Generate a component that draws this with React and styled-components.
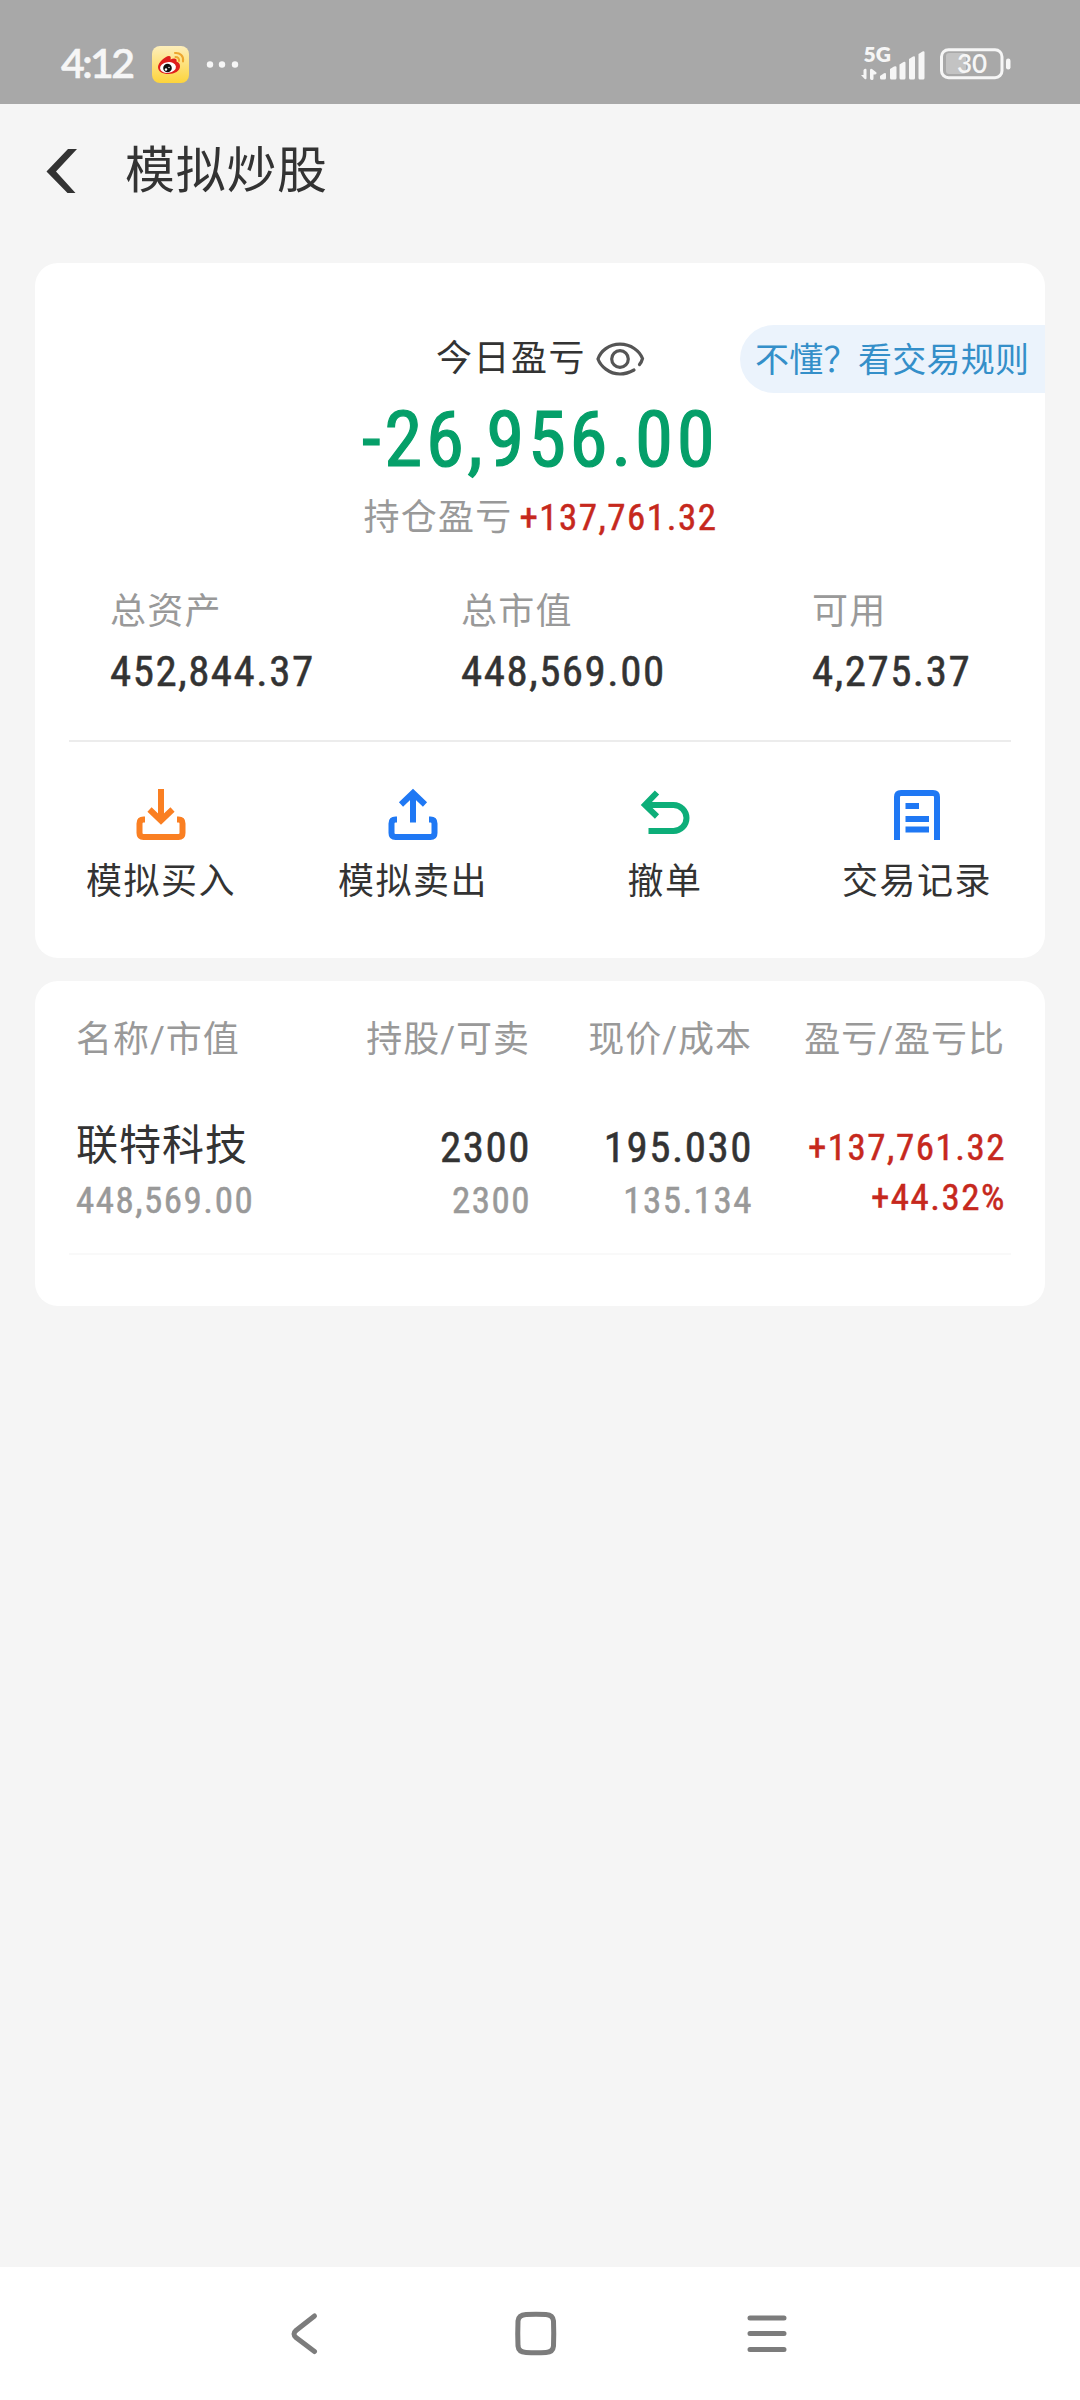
import React from 'react';
import styled, { createGlobalStyle } from 'styled-components';

const GlobalStyle = createGlobalStyle`
	* {
		box-sizing: border-box;
	}

	body {
		margin: 0;
		background: #f5f5f5;
		font-family: Roboto, 'Noto Sans CJK SC', sans-serif;
		color: #333333;
	}

	svg {
		display: block;
		flex: none;
		overflow: visible;
	}
`;

const Screen = styled.div`
	display: flex;
	flex-direction: column;
	width: 1080px;
	height: 2400px;
	background: #f5f5f5;
	overflow: hidden;
`;

const StatusBar = styled.div`
	display: flex;
	align-items: center;
	justify-content: space-between;
	height: 104px;
	padding: 25px 69px 0 61px;
	background: #a8a8a8;
	color: #f6f6f6;
`;

const StatusGroup = styled.div`
	display: flex;
	align-items: center;
	gap: ${({ gap }) => gap}px;
`;

const Clock = styled.span`
	width: 75px;
	padding-bottom: 3px;
	font-family: Lato, sans-serif;
	font-size: 41px;
	font-weight: 600;
	line-height: 40px;
	letter-spacing: -2.6px;
	white-space: nowrap;
	-webkit-text-stroke: 0.5px currentColor;
`;

const Header = styled.header`
	display: flex;
	align-items: center;
	height: 159px;
	padding: 0 0 25px 46px;
	gap: 47px;
`;

const Title = styled.h1`
	margin: 0;
	font-size: 50px;
	font-weight: 400;
	line-height: 58px;
	letter-spacing: 0.7px;
`;

const Card = styled.section`
	width: 1010px;
	height: ${({ height }) => height}px;
	margin: 0 0 23px 35px;
	border-radius: 23px;
	background: #ffffff;
`;

const Summary = styled.div`
	position: relative;
	display: flex;
	flex-direction: column;
	align-items: center;
	padding-top: 72px;
`;

const RulesLink = styled.a`
	position: absolute;
	top: 62px;
	right: 0;
	width: 305px;
	height: 68px;
	padding-left: 15px;
	border-radius: 34px 0 0 34px;
	background: #ebf3fc;
	color: #348fc9;
	font-size: 34px;
	line-height: 70px;
	letter-spacing: 0.3px;
	white-space: nowrap;
`;

const TodayLabel = styled.div`
	display: flex;
	align-items: center;
	gap: 10px;
	height: 48px;
	font-size: 36px;
	line-height: 50px;
	letter-spacing: 1.5px;
`;

const TodayValue = styled.div`
	height: 112px;
	font-size: 77px;
	font-weight: 400;
	font-stretch: condensed;
	line-height: 115px;
	letter-spacing: 3.6px;
	color: #059f69;
	-webkit-text-stroke: 1.2px currentColor;
`;

const HoldingLine = styled.div`
	display: flex;
	align-items: center;
	height: 46px;
	gap: 7px;
`;

const Label = styled.span`
	font-size: 36px;
	line-height: 44px;
	letter-spacing: 1.2px;
	color: #999999;
`;

const Figure = styled.span`
	margin-right: -1px;
	font-size: ${({ size }) => size}px;
	font-weight: 400;
	font-stretch: condensed;
	line-height: 44px;
	letter-spacing: 1.5px;
	color: ${({ color }) => color || '#333333'};
	white-space: nowrap;
	-webkit-text-stroke: 0.5px currentColor;
`;

const Stats = styled.div`
	display: grid;
	grid-template-columns: 351px 351px auto;
	height: 150px;
	margin: 49px 0 0 75px;
`;

const Stat = styled.div`
	display: flex;
	flex-direction: column;
	gap: 15px;
`;

const Divider = styled.div`
	height: 2px;
	margin: 0 34px;
	background: ${({ color }) => color};
`;

const Actions = styled.div`
	display: grid;
	grid-template-columns: repeat(4, 252px);
	padding-top: 46px;
`;

const Action = styled.div`
	display: flex;
	flex-direction: column;
	align-items: center;
	gap: 18px;
	font-size: 36px;
	line-height: 48px;
	letter-spacing: 1.5px;
`;

const Holdings = styled.div`
	display: grid;
	grid-template-columns: 195px 259px 222px 253px;
	padding: 0 41px;
`;

const HeadCell = styled.div`
	height: 112px;
	padding-top: 36px;
	font-size: 36px;
	line-height: 46px;
	letter-spacing: 1px;
	color: #999999;
	text-align: ${({ align }) => align || 'right'};
	white-space: nowrap;
`;

const Cell = styled.div`
	display: flex;
	flex-direction: column;
	align-items: ${({ align }) => align || 'flex-end'};
	gap: ${({ gap }) => gap}px;
	height: 160px;
	padding-top: ${({ top }) => top}px;
`;

const StockName = styled.span`
	font-size: 42px;
	line-height: 48px;
	letter-spacing: 1px;
	white-space: nowrap;
`;

const NavBar = styled.nav`
	display: flex;
	justify-content: space-between;
	height: 133px;
	margin-top: auto;
	padding: 42px 290px 0 288px;
	background: #ffffff;
`;

const RED = '#c6281d';
const GREY = '#999999';

const stats = [
	{ label: '总资产', value: '452,844.37' },
	{ label: '总市值', value: '448,569.00' },
	{ label: '可用', value: '4,275.37' },
];

const WeiboIcon = () => (
	<svg width="38" height="38" viewBox="0 0 38 38">
		<defs>
			<linearGradient id="weiboBg" x1="0" y1="0" x2="0" y2="1">
				<stop offset="0" stopColor="#fdeebb" />
				<stop offset="1" stopColor="#fdd43b" />
			</linearGradient>
		</defs>
		<rect width="37" height="37" rx="8" fill="url(#weiboBg)" />
		<path
			d="M6 21c0-4 7-11 11-11 2 0 2 2 1.500 3.500 3-1.500 7-1.500 6 2 3 1 3.500 3 3.500 5 0 4.500-5.500 7.500-11.500 7.500S6 25.500 6 21z"
			fill="#df1f1c"
		/>
		<ellipse cx="16" cy="21.500" rx="8" ry="5.300" fill="#ffffff" transform="rotate(-8 16 21.500)" />
		<circle cx="15.500" cy="22" r="4.300" fill="#111111" />
		<circle cx="14" cy="23.500" r="1.200" fill="#ffffff" />
		<circle cx="17" cy="21.500" r="0.700" fill="#ffffff" />
		<path
			d="M23 7c5-.5 9 3 8 8.500M23.500 11c2.500 0 4 1.500 3.500 4"
			fill="none"
			stroke="#eda62f"
			strokeWidth="2"
			strokeLinecap="round"
		/>
	</svg>
);

const MoreDots = () => (
	<svg width="34" height="8" viewBox="0 0 34 8" fill="#f6f6f6">
		<circle cx="4" cy="3.500" r="3.200" />
		<circle cx="16" cy="3.500" r="3.200" />
		<circle cx="29" cy="3.500" r="3.200" />
	</svg>
);

const SignalIcon = () => (
	<svg width="66" height="40" viewBox="0 0 66 40" fill="#f6f6f6">
		<text x="2.500" y="16.500" fontFamily="Lato, sans-serif" fontSize="21" fontWeight="800">
			5G
		</text>
		<path d="M3.500 24q2-1 2 1v8q0 2-1.800 1L0 30h2.500v-5zM9 25.500q0-2.500 2-1.500l4.500 3.500q.5 2-1.500 2h-1.500v4q0 1.500-1.500 1.500T9 33.500z" />
		<path d="M19 31l4-2.700q2-1 2 1v3.700q0 1.500-1.500 1.500h-3Q19 34.500 19 33z" />
		<path d="M29 24l4-2.500q2.500-1 2.500 1v10.500q0 1.500-1.500 1.500h-3.500Q29 34.500 29 33z" />
		<path d="M38.500 19.500l4-2.500q2-1 2 1v15q0 1.500-1.500 1.500h-3q-1.500 0-1.500-1.500z" />
		<path d="M48 14l4-2.500q2-1 2 1v20.500q0 1.500-1.500 1.500h-3Q48 34.500 48 33z" />
		<path d="M57.500 9l4-2.500q2-1 2 1v25.500q0 1.500-1.500 1.500h-3q-1.500 0-1.500-1.500z" />
	</svg>
);

const BatteryIcon = () => (
	<svg width="72" height="34" viewBox="0 0 72 34">
		<rect x="7" y="5" width="20" height="21" rx="3" fill="#c3c3c3" />
		<rect x="2.500" y="1.700" width="60.500" height="28" rx="7" fill="none" stroke="#f6f6f6" strokeWidth="3" />
		<rect x="67" y="10.500" width="4.500" height="11" rx="2.200" fill="#f6f6f6" />
		<text
			x="33"
			y="25"
			textAnchor="middle"
			fontFamily="Lato, sans-serif"
			fontSize="26"
			fontWeight="600"
			fill="#f6f6f6"
		>
			30
		</text>
	</svg>
);

const BackIcon = () => (
	<svg width="32" height="46" viewBox="0 0 32 46">
		<path d="M22 1h9L10 23.500 29.500 45H21.500L.5 23.500z" fill="#333333" />
	</svg>
);

const EyeIcon = () => (
	<svg width="48" height="36" viewBox="0 0 48 36" fill="none" stroke="#555555" strokeWidth="3.200">
		<path d="M38 29C33.500 31.500 29 33 24 33 13 33 4.500 25 2 18 4.500 10 13 3.200 24 3.200S43.500 10 46.500 17.500C46 19.500 45 22 43.500 23.500" strokeLinecap="round" />
		<circle cx="24" cy="18" r="8.300" />
	</svg>
);

const BuyIcon = () => (
	<svg width="52" height="52" viewBox="0 0 52 52" fill="none" stroke="#fa7f22" strokeWidth="6">
		<path d="M26 1v31M14.500 21.500L26 32.500l11.500-11" />
		<path d="M10 31.500H8.500Q4.500 31.500 4.500 35.500V45q0 4 4 4h35q4 0 4-4v-9.500q0-4-4-4H42" />
	</svg>
);

const SellIcon = () => (
	<svg width="52" height="52" viewBox="0 0 52 52" fill="none" stroke="#1f78f4" strokeWidth="6">
		<path d="M26 34.500V5M14 16.500L26 5l12 11.500" />
		<path d="M10 31.500H8.500Q4.500 31.500 4.500 35.500V45q0 4 4 4h35q4 0 4-4v-9.500q0-4-4-4H42" />
	</svg>
);

const CancelIcon = () => (
	<svg width="52" height="52" viewBox="0 0 52 52" fill="none" stroke="#0dae79" strokeWidth="6">
		<path d="M18 4.500L6 17l12 11.500" />
		<path d="M6 17h28.500a13 13 0 0 1 0 26H9.500" />
	</svg>
);

const RecordIcon = () => (
	<svg width="52" height="52" viewBox="0 0 52 52" fill="none" stroke="#1f78f4" strokeWidth="6">
		<path d="M6 52V9q0-4 4-4h32q4 0 4 4v43" />
		<path d="M14.500 18H28M14.500 31H38M14.500 41.500H38" />
	</svg>
);

const actions = [
	{ label: '模拟买入', Icon: BuyIcon },
	{ label: '模拟卖出', Icon: SellIcon },
	{ label: '撤单', Icon: CancelIcon },
	{ label: '交易记录', Icon: RecordIcon },
];

const NavIcon = ({ children }) => (
	<svg
		width="48"
		height="48"
		viewBox="0 0 48 48"
		fill="none"
		stroke="#7c7c7c"
		strokeWidth="5"
		strokeLinecap="round"
	>
		{children}
	</svg>
);

const App = () => (
	<Screen>
		<GlobalStyle />
		<StatusBar>
			<StatusGroup gap={16}>
				<Clock>4:12</Clock>
				<WeiboIcon />
				<MoreDots />
			</StatusGroup>
			<StatusGroup gap={12}>
				<SignalIcon />
				<BatteryIcon />
			</StatusGroup>
		</StatusBar>

		<Header>
			<BackIcon />
			<Title>模拟炒股</Title>
		</Header>

		<Card height={695}>
			<Summary>
				<TodayLabel>
					今日盈亏
					<EyeIcon />
				</TodayLabel>
				<TodayValue>-26,956.00</TodayValue>
				<HoldingLine>
					<Label>持仓盈亏</Label>
					<Figure size={37} color={RED}>
						+137,761.32
					</Figure>
				</HoldingLine>
				<RulesLink>不懂？看交易规则</RulesLink>
			</Summary>
			<Stats>
				{stats.map(({ label, value }) => (
					<Stat key={label}>
						<Label>{label}</Label>
						<Figure size={43}>{value}</Figure>
					</Stat>
				))}
			</Stats>
			<Divider color="#ececec" />
			<Actions>
				{actions.map(({ label, Icon }) => (
					<Action key={label}>
						<Icon />
						{label}
					</Action>
				))}
			</Actions>
		</Card>

		<Card height={325}>
			<Holdings>
				<HeadCell align="left">名称/市值</HeadCell>
				<HeadCell>持股/可卖</HeadCell>
				<HeadCell>现价/成本</HeadCell>
				<HeadCell>盈亏/盈亏比</HeadCell>
				<Cell align="flex-start" gap={9} top={29}>
					<StockName>联特科技</StockName>
					<Figure size={37} color={GREY}>
						448,569.00
					</Figure>
				</Cell>
				<Cell gap={10} top={32}>
					<Figure size={43}>2300</Figure>
					<Figure size={37} color={GREY}>
						2300
					</Figure>
				</Cell>
				<Cell gap={10} top={32}>
					<Figure size={43}>195.030</Figure>
					<Figure size={37} color={GREY}>
						135.134
					</Figure>
				</Cell>
				<Cell gap={6} top={33}>
					<Figure size={37} color={RED}>
						+137,761.32
					</Figure>
					<Figure size={37} color={RED}>
						+44.32%
					</Figure>
				</Cell>
			</Holdings>
			<Divider color="#f9f9f9" />
		</Card>

		<NavBar>
			<NavIcon>
				<path d="M26.500 7L8 21.500q-4 3.500 0 7L26.500 42.500" />
			</NavIcon>
			<NavIcon>
				<path d="M11 5.500Q21 5 31 5.500Q38 6 38.500 12Q39 24.500 38.500 37Q38 43 31 43.500Q21 44 11 43.500Q3.500 43 3 37Q2.500 24.500 3 12Q3.500 6 11 5.500z" />
			</NavIcon>
			<NavIcon>
				<path d="M8 9h34M8 24.500h34M8 40.500h34" />
			</NavIcon>
		</NavBar>
	</Screen>
);

export default App;
